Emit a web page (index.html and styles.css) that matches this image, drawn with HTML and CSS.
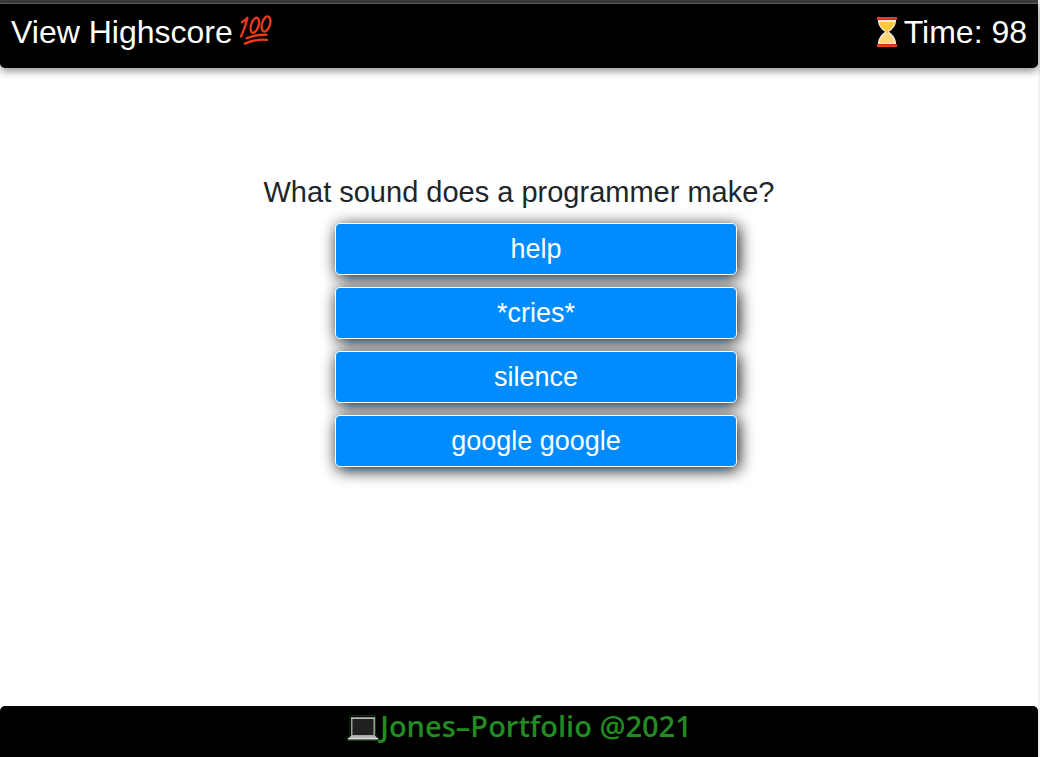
FILE: index.html
```html
<!DOCTYPE html>
<html lang="en">
<head>
<meta charset="utf-8">
<meta name="viewport" content="width=device-width, initial-scale=1">
<title>Code Quiz</title>
<link rel="stylesheet" href="styles.css">
</head>
<body>
<div class="page">
  <header class="topbar">
    <a class="highscore" href="#highscore">View Highscore<svg class="hundred" viewBox="0 0 34 32" aria-hidden="true">
      <g fill="none" stroke="#f03a17" stroke-width="2.3" stroke-linecap="round" stroke-linejoin="round">
        <path d="M3 7.300Q6.500 5.500 8.500 2.800Q6.500 12 2 21.500"/>
        <ellipse cx="15.800" cy="10.300" rx="3.700" ry="7.800" transform="rotate(17 15.800 10.300)"/>
        <ellipse cx="27" cy="9" rx="4" ry="7.800" transform="rotate(17 27 9)"/>
        <path d="M7.500 23.200Q17 19.400 27.500 19.800M5.800 28.600Q16 24 28 24.800"/>
      </g>
    </svg></a>
    <div class="timer"><svg class="hourglass" viewBox="0 0 22 32" aria-hidden="true">
      <path fill="#f4e8e5" d="M2 4H20V6Q19 12 13 15.8Q19 20 20 26V28H2V26Q3 20 9 15.8Q3 12 2 6Z"/>
      <path fill="#ffc83d" d="M3.2 6H18.8Q17.8 11.3 12.2 14.8V18H9.8V14.8Q4.2 11.3 3.2 6Z"/>
      <path fill="#ffd67a" d="M9.8 17H12.2Q17.8 20.5 18.8 27H3.2Q4.2 20.5 9.8 17Z"/>
      <path fill="#f03a17" d="M1 1H21V4H1ZM1 28H21V31H1Z"/>
      <path fill="#c62b22" d="M1 3H21V4H1ZM1 28H21V29H1Z"/>
    </svg><span>Time: 98</span></div>
  </header>
  <main class="quiz">
    <h1 class="question">What sound does a programmer make?</h1>
    <div class="answers">
      <button class="answer" type="button">help</button>
      <button class="answer" type="button">*cries*</button>
      <button class="answer" type="button">silence</button>
      <button class="answer" type="button">google google</button>
    </div>
  </main>
  <footer class="footer">
    <svg class="laptop" viewBox="0 0 34 28" aria-hidden="true">
      <path fill="none" stroke="#0b3b0b" d="M4 3Q4 1.5 5.5 1.5H28Q29.500 1.5 29.500 3V20L32.500 24Q33 26.500 30 26.500H3Q.5 26.500 1 24L4 20Z"/>
      <path fill="#9b9b9b" d="M5 3.500H29V23H5Z"/>
      <path fill="#d0d0d0" d="M5 3.500H29V4.500H5Z"/>
      <path fill="#212121" d="M6.500 5H27.500V21H6.500Z"/>
      <path fill="#b5b5b5" d="M5 21.500H29L32 25H2Z"/>
      <path fill="#dedede" d="M2 24H32V25.500H2Z"/>
    </svg><span>Jones–Portfolio @2021</span>
  </footer>
</div>
</body>
</html>
```
FILE: styles.css
```css
* { box-sizing: border-box; }

body {
  margin: 0;
  background: #f1f1f1;
  font-family: "Liberation Sans", Arial, sans-serif;
}

.page {
  display: flex;
  flex-direction: column;
  min-height: 100vh;
  margin-right: 2px;
  background: #fff;
  border-top: 3px solid #3c3c3c;
}

.topbar {
  display: flex;
  justify-content: space-between;
  align-items: flex-start;
  padding: 10px 11px 18px;
  border-top: 1px solid #5c5c5c;
  border-radius: 0 0 5px 5px;
  background: #000;
  color: #fff;
  font-size: 32px;
  line-height: 36px;
  box-shadow: 0 3px 8px rgba(0, 0, 0, 0.45);
}

.highscore,
.timer {
  display: flex;
  color: inherit;
  text-decoration: none;
}

.hundred {
  width: 34px;
  height: 32px;
  margin: 1px 0 0 6px;
}

.hourglass {
  width: 22px;
  height: 32px;
  margin: 2px 6px 0 0;
}

.quiz {
  flex: 1;
  padding-top: 106px;
}

.question {
  margin: 0 0 13px;
  color: #212529;
  font-size: 29px;
  font-weight: 400;
  line-height: 36px;
  text-align: center;
}

.answers {
  display: flex;
  flex-direction: column;
  gap: 12px;
  width: 402px;
  max-width: 100%;
  margin: 0 auto;
  transform: translateX(17px);
}

.answer {
  padding: 8px;
  border: 1px solid #fff;
  border-radius: 5px;
  background: #008cff;
  color: #fff;
  font-family: inherit;
  font-size: 27px;
  line-height: 34px;
  box-shadow: 2px 3px 16px rgba(0, 0, 0, 0.95);
}

.footer {
  display: flex;
  justify-content: center;
  padding: 2px 0 13px;
  border-radius: 5px 5px 0 0;
  background: #000;
  color: #228b22;
  font-family: "Open Sans", "Noto Sans", sans-serif;
  font-size: 29px;
  font-weight: 600;
  line-height: 36px;
}

.laptop {
  width: 34px;
  height: 28px;
  margin-top: 6px;
}
```
